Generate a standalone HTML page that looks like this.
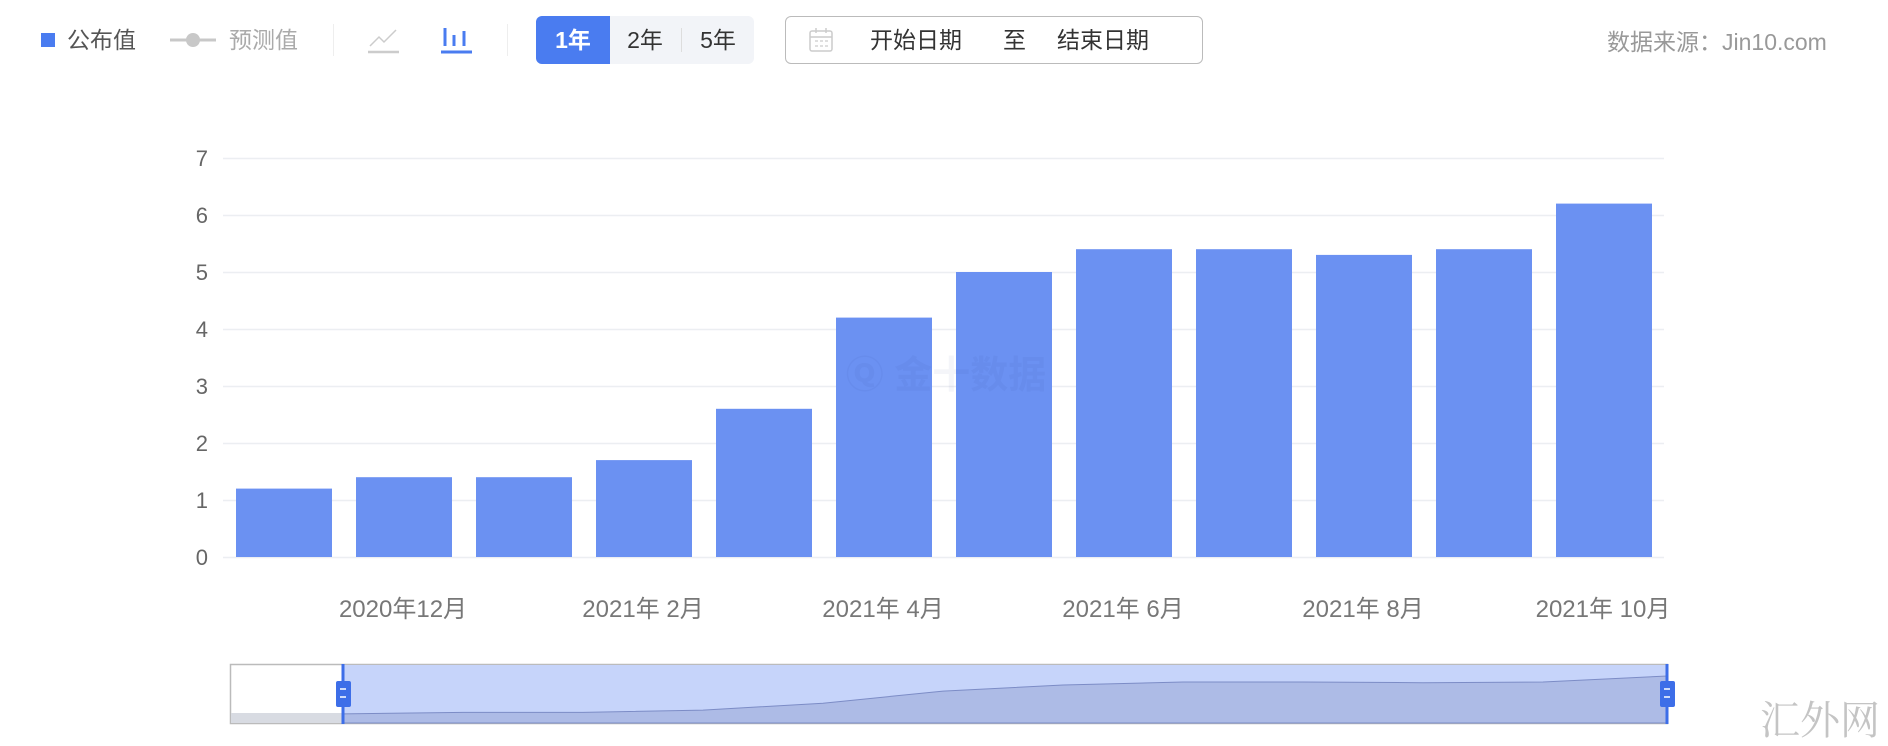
<!DOCTYPE html>
<html><head><meta charset="utf-8"><style>
html,body{margin:0;padding:0;background:#fff;width:1888px;height:746px;overflow:hidden;position:relative;font-family:"Liberation Sans","Noto Sans CJK SC",sans-serif}
.a{position:absolute;white-space:nowrap}
</style></head><body>
<div class="a" style="left:41px;top:33px;width:14px;height:14px;background:#4a7cf0"></div>
<div class="a" style="left:67px;top:21px;font-size:23px;color:#555">公布值</div>
<svg class="a" style="left:168px;top:30px" width="52" height="20"><line x1="2" y1="10" x2="48" y2="10" stroke="#c8c8c8" stroke-width="3"/><circle cx="25" cy="10" r="7" fill="#c8c8c8"/></svg>
<div class="a" style="left:229px;top:21px;font-size:23px;color:#aaa">预测值</div>
<div class="a" style="left:333px;top:24px;width:1px;height:32px;background:#eee"></div>
<svg class="a" style="left:366px;top:24px" width="36" height="32"><polyline points="4,22 13,13 18,18 30,6" fill="none" stroke="#ccc" stroke-width="1.5"/><line x1="2" y1="28" x2="33" y2="28" stroke="#ccc" stroke-width="2.5"/></svg>
<svg class="a" style="left:440px;top:24px" width="34" height="32"><line x1="5" y1="4" x2="5" y2="22" stroke="#4a7cf0" stroke-width="3"/><line x1="14" y1="11" x2="14" y2="22" stroke="#4a7cf0" stroke-width="3"/><line x1="24" y1="7" x2="24" y2="22" stroke="#4a7cf0" stroke-width="3"/><line x1="1" y1="28" x2="32" y2="28" stroke="#4a7cf0" stroke-width="3"/></svg>
<div class="a" style="left:507px;top:24px;width:1px;height:32px;background:#eee"></div>
<div class="a" style="left:536px;top:16px;width:218px;height:48px;background:#f2f4f8;border-radius:6px"></div>
<div class="a" style="left:536px;top:16px;width:74px;height:48px;background:#4a7cf0;border-radius:6px 0 0 6px;color:#fff;font-size:23px;font-weight:bold;line-height:48px;text-align:center">1年</div>
<div class="a" style="left:610px;top:16px;width:70px;line-height:48px;font-size:23px;color:#333;text-align:center">2年</div>
<div class="a" style="left:681px;top:28px;width:1px;height:24px;background:#ddd"></div>
<div class="a" style="left:682px;top:16px;width:72px;line-height:48px;font-size:23px;color:#333;text-align:center">5年</div>
<div class="a" style="left:785px;top:16px;width:416px;height:46px;border:1.5px solid #bbb;border-radius:6px"></div>
<svg class="a" style="left:808px;top:27px" width="26" height="26"><rect x="2" y="4" width="22" height="20" rx="2" fill="none" stroke="#ccc" stroke-width="1.5"/><line x1="2" y1="10" x2="24" y2="10" stroke="#ccc" stroke-width="1.5"/><line x1="8" y1="1" x2="8" y2="6" stroke="#ccc" stroke-width="1.5"/><line x1="18" y1="1" x2="18" y2="6" stroke="#ccc" stroke-width="1.5"/><path d="M7 14h3M12 14h3M17 14h3M7 19h3M12 19h3M17 19h3" stroke="#ccc" stroke-width="1.2"/></svg>
<div class="a" style="left:870px;top:21px;font-size:23px;color:#333">开始日期</div>
<div class="a" style="left:1003px;top:21px;font-size:23px;color:#333">至</div>
<div class="a" style="left:1057px;top:21px;font-size:23px;color:#333">结束日期</div>
<div class="a" style="left:1607px;top:23px;font-size:23px;color:#999">数据来源：Jin10.com</div>

<svg class="a" style="left:0;top:0" width="1888" height="746" font-family="Liberation Sans, Noto Sans CJK SC, sans-serif">
<g stroke="#eceef2" stroke-width="1.5">
<line x1="223" y1="158.5" x2="1664" y2="158.5"/><line x1="223" y1="215.5" x2="1664" y2="215.5"/><line x1="223" y1="272.5" x2="1664" y2="272.5"/><line x1="223" y1="329.5" x2="1664" y2="329.5"/><line x1="223" y1="386.5" x2="1664" y2="386.5"/><line x1="223" y1="443.5" x2="1664" y2="443.5"/><line x1="223" y1="500.5" x2="1664" y2="500.5"/><line x1="223" y1="557.5" x2="1664" y2="557.5"/>
</g>
<g fill="#666" font-size="22" text-anchor="end">
<text x="208" y="166">7</text><text x="208" y="223">6</text><text x="208" y="280">5</text><text x="208" y="337">4</text><text x="208" y="394">3</text><text x="208" y="451">2</text><text x="208" y="508">1</text><text x="208" y="565">0</text>
</g>
<g fill="#6b91f2">
<rect x="236" y="488.6" width="96" height="68.4"/>
<rect x="356" y="477.2" width="96" height="79.8"/>
<rect x="476" y="477.2" width="96" height="79.8"/>
<rect x="596" y="460.1" width="96" height="96.9"/>
<rect x="716" y="408.8" width="96" height="148.2"/>
<rect x="836" y="317.6" width="96" height="239.4"/>
<rect x="956" y="272" width="96" height="285"/>
<rect x="1076" y="249.2" width="96" height="307.8"/>
<rect x="1196" y="249.2" width="96" height="307.8"/>
<rect x="1316" y="254.9" width="96" height="302.1"/>
<rect x="1436" y="249.2" width="96" height="307.8"/>
<rect x="1556" y="203.6" width="96" height="353.4"/>
</g>
<text x="946" y="388" font-size="38" font-weight="bold" fill="rgba(40,60,130,0.05)" text-anchor="middle">Ⓠ 金十数据</text>
<g fill="#777" font-size="24" text-anchor="middle">
<text x="403" y="617">2020年12月</text><text x="643" y="617">2021年 2月</text><text x="883" y="617">2021年 4月</text><text x="1123" y="617">2021年 6月</text><text x="1363" y="617">2021年 8月</text><text x="1603" y="617">2021年 10月</text>
</g>
<rect x="230.5" y="664.5" width="1437" height="59" fill="#fff" stroke="#bbb" stroke-width="1.5"/>
<rect x="231" y="713" width="112" height="10" fill="#d8dbe2"/>
<rect x="343" y="665" width="1324" height="58" fill="#c6d4fa"/>
<path d="M343 713.9 L463 712.4 L583 712.4 L703 710.1 L823 703.2 L943 691.1 L1063 685 L1183 682 L1303 682 L1423 682.7 L1543 682 L1667 676 L1667 723 L343 723Z" fill="#adbbe6" stroke="#7c8cc6" stroke-width="1"/>
<line x1="343" y1="664" x2="343" y2="724" stroke="#3d6ee8" stroke-width="3"/>
<line x1="1667" y1="664" x2="1667" y2="724" stroke="#3d6ee8" stroke-width="3"/>
<rect x="336" y="681" width="15" height="26" rx="2" fill="#3d6ee8"/>
<rect x="1660" y="681" width="15" height="26" rx="2" fill="#3d6ee8"/>
<path d="M340 689h6M340 697h6M1664 689h6M1664 697h6" stroke="#fff" stroke-width="1.5"/>
<text x="1760" y="734" font-family="Liberation Serif, Noto Serif CJK SC, serif" font-size="40" fill="#c4c4c4">汇外网</text>
</svg>
</body></html>
